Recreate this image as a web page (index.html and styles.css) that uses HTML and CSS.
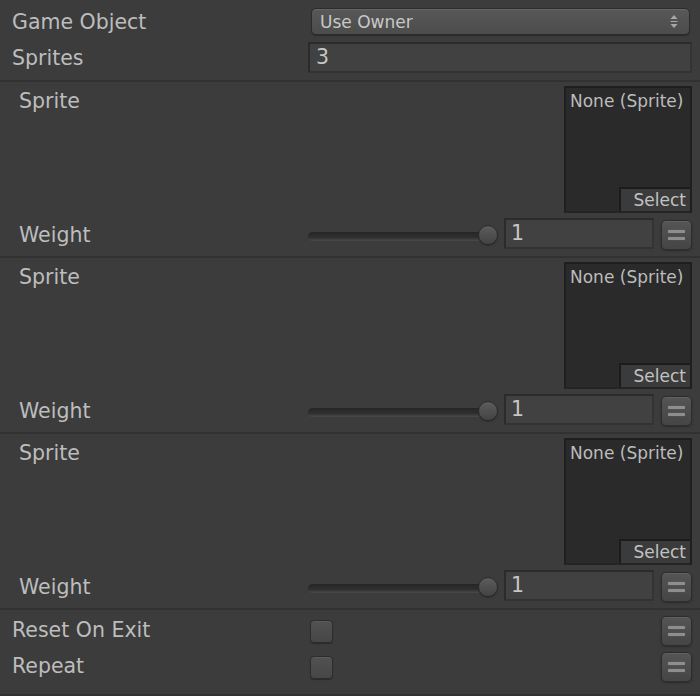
FILE: index.html
```html
<!DOCTYPE html>
<html>
<head>
<meta charset="utf-8">
<link rel="stylesheet" href="styles.css">
</head>
<body>
<div class="inspector">
  <div class="top">
    <div class="row row-dd">
      <span class="label">Game Object</span>
      <div class="dropdown">
        <span>Use Owner</span>
        <svg class="dd-arrow" width="8" height="13" viewBox="0 0 8 13"><path d="M4 0 L7.5 4 L0.5 4 Z M0.5 6 H7.5 V7 H0.5 Z M0.5 9 L7.5 9 L4 13 Z" fill="#a8a8a8"/></svg>
      </div>
    </div>
    <div class="row row-field">
      <span class="label">Sprites</span>
      <div class="field">3</div>
    </div>
  </div>
  <div class="sep"></div>

  <div class="group">
    <div class="g-top">
      <span class="glabel">Sprite</span>
      <div class="objbox"><span class="none">None (Sprite)</span><div class="select">Select</div></div>
    </div>
    <div class="g-weight">
      <span class="wlabel">Weight</span>
      <div class="slider"><div class="track"></div><div class="thumb"></div></div>
      <div class="numfield">1</div>
      <div class="btn"><i></i><i></i></div>
    </div>
  </div>
  <div class="sep"></div>

  <div class="group">
    <div class="g-top">
      <span class="glabel">Sprite</span>
      <div class="objbox"><span class="none">None (Sprite)</span><div class="select">Select</div></div>
    </div>
    <div class="g-weight">
      <span class="wlabel">Weight</span>
      <div class="slider"><div class="track"></div><div class="thumb"></div></div>
      <div class="numfield">1</div>
      <div class="btn"><i></i><i></i></div>
    </div>
  </div>
  <div class="sep"></div>

  <div class="group">
    <div class="g-top">
      <span class="glabel">Sprite</span>
      <div class="objbox"><span class="none">None (Sprite)</span><div class="select">Select</div></div>
    </div>
    <div class="g-weight">
      <span class="wlabel">Weight</span>
      <div class="slider"><div class="track"></div><div class="thumb"></div></div>
      <div class="numfield">1</div>
      <div class="btn"><i></i><i></i></div>
    </div>
  </div>
  <div class="sep"></div>

  <div class="bottom">
    <div class="brow">
      <span class="label">Reset On Exit</span>
      <div class="check"></div>
      <div class="spacer"></div>
      <div class="btn"><i></i><i></i></div>
    </div>
    <div class="brow">
      <span class="label">Repeat</span>
      <div class="check"></div>
      <div class="spacer"></div>
      <div class="btn"><i></i><i></i></div>
    </div>
  </div>
  <div class="sep"></div>
</div>
</body>
</html>
```
FILE: styles.css
```css
* { box-sizing: border-box; }
html, body { margin: 0; padding: 0; }
body {
  width: 700px;
  height: 696px;
  background: #3c3c3c;
  font-family: "DejaVu Sans", "Liberation Sans", sans-serif;
  color: #bdbdbd;
  overflow: hidden;
}
.inspector { width: 700px; }

.top { padding: 8px 8px 7px 12px; display: flex; flex-direction: column; gap: 7px; }
.row { display: flex; align-items: center; }
.row-dd { height: 27px; }
.row-field { height: 31px; }
.label { flex: 0 0 296px; font-size: 20.5px; line-height: 24px; white-space: nowrap; }

.dropdown {
  margin-left: 3px;
  margin-right: 2px;
  flex: 1;
  height: 27px;
  border-radius: 5px;
  background: linear-gradient(#585858, #4c4c4c);
  border: 1px solid #2c2c2c;
  box-shadow: inset 0 1px 0 #666, 0 1px 1px #2a2a2a;
  display: flex;
  align-items: center;
  padding: 0 11px 0 8px;
  font-size: 17px;
  color: #c8c8c8;
}
.dropdown span { flex: 1; }
.dd-arrow { display: block; }

.field {
  flex: 1;
  height: 31px;
  background: #414141;
  border: 2px solid #2b2b2b;
  border-bottom-color: #333;
  border-right-color: #333;
  font-size: 20.5px;
  line-height: 26px;
  padding-left: 6px;
  color: #c6c6c6;
}

.sep { height: 2px; background: #323232; }

.group { padding: 4px 8px 6px 19px; }
.g-top { display: flex; height: 127px; }
.glabel { flex: 1; font-size: 20.5px; line-height: 24px; padding-top: 3px; }
.objbox {
  position: relative;
  flex: 0 0 128px;
  height: 127px;
  background: #2a2a2a;
  border: 2px solid #1f1f1f;
  border-bottom-color: #242424;
}
.none {
  display: block;
  font-size: 17px;
  line-height: 20px;
  padding: 3px 0 0 4px;
  white-space: nowrap;
  color: #bcbcbc;
}
.select {
  position: absolute;
  right: 0;
  bottom: 0;
  width: 71px;
  height: 24px;
  background: #3b3b3b;
  border-top: 2px solid #1c1c1c;
  border-left: 2px solid #1c1c1c;
  font-size: 17px;
  line-height: 22px;
  text-align: right;
  padding-right: 4px;
  color: #c2c2c2;
}

.g-weight { display: flex; height: 32px; margin-top: 5px; align-items: flex-start; }
.wlabel { flex: 0 0 289px; font-size: 20.5px; line-height: 24px; padding-top: 5px; }
.slider { position: relative; flex: 0 0 190px; height: 32px; margin-right: 6px; }
.track {
  position: absolute;
  left: 0;
  top: 14px;
  width: 184px;
  height: 9px;
  border-radius: 5px;
  background: linear-gradient(#262626, #2f2f2f 60%, #4a4a4a);
}
.thumb {
  position: absolute;
  left: 170px;
  top: 7px;
  width: 20px;
  height: 20px;
  border-radius: 50%;
  background: linear-gradient(#5c5c5c, #444);
  border: 1px solid #2a2a2a;
  box-shadow: 0 1px 1px #2a2a2a;
}
.numfield {
  flex: 0 0 150px;
  height: 31px;
  background: #414141;
  border: 2px solid #2b2b2b;
  border-bottom-color: #333;
  border-right-color: #333;
  font-size: 20.5px;
  line-height: 26px;
  padding-left: 5px;
  color: #c6c6c6;
}
.btn {
  flex: 0 0 31px;
  width: 31px;
  height: 30px;
  margin-left: 7px;
  margin-top: 2px;
  border-radius: 5px;
  background: linear-gradient(#555, #454545);
  border: 1px solid #2d2d2d;
  box-shadow: inset 0 1px 0 #606060, 0 1px 2px #2a2a2a;
  display: flex;
  flex-direction: column;
  align-items: center;
  justify-content: center;
  gap: 4px;
}
.btn i {
  display: block;
  width: 17px;
  height: 3px;
  border-radius: 1px;
  background: #8e8e8e;
  box-shadow: 0 0 1px #777;
}

.bottom { padding: 6px 8px 12px 12px; display: flex; flex-direction: column; gap: 6px; }
.brow { display: flex; align-items: center; height: 30px; }
.brow .label { margin-top: -2px; }
.brow .btn { margin-top: 0; margin-left: 0; }
.check {
  margin-left: 2px;
  width: 23px;
  height: 23px;
  border-radius: 4px;
  background: linear-gradient(#515151, #474747);
  border: 1px solid #2c2c2c;
  box-shadow: inset 0 1px 0 #5c5c5c, 0 1px 1px #2a2a2a;
}
.spacer { flex: 1; }
```
